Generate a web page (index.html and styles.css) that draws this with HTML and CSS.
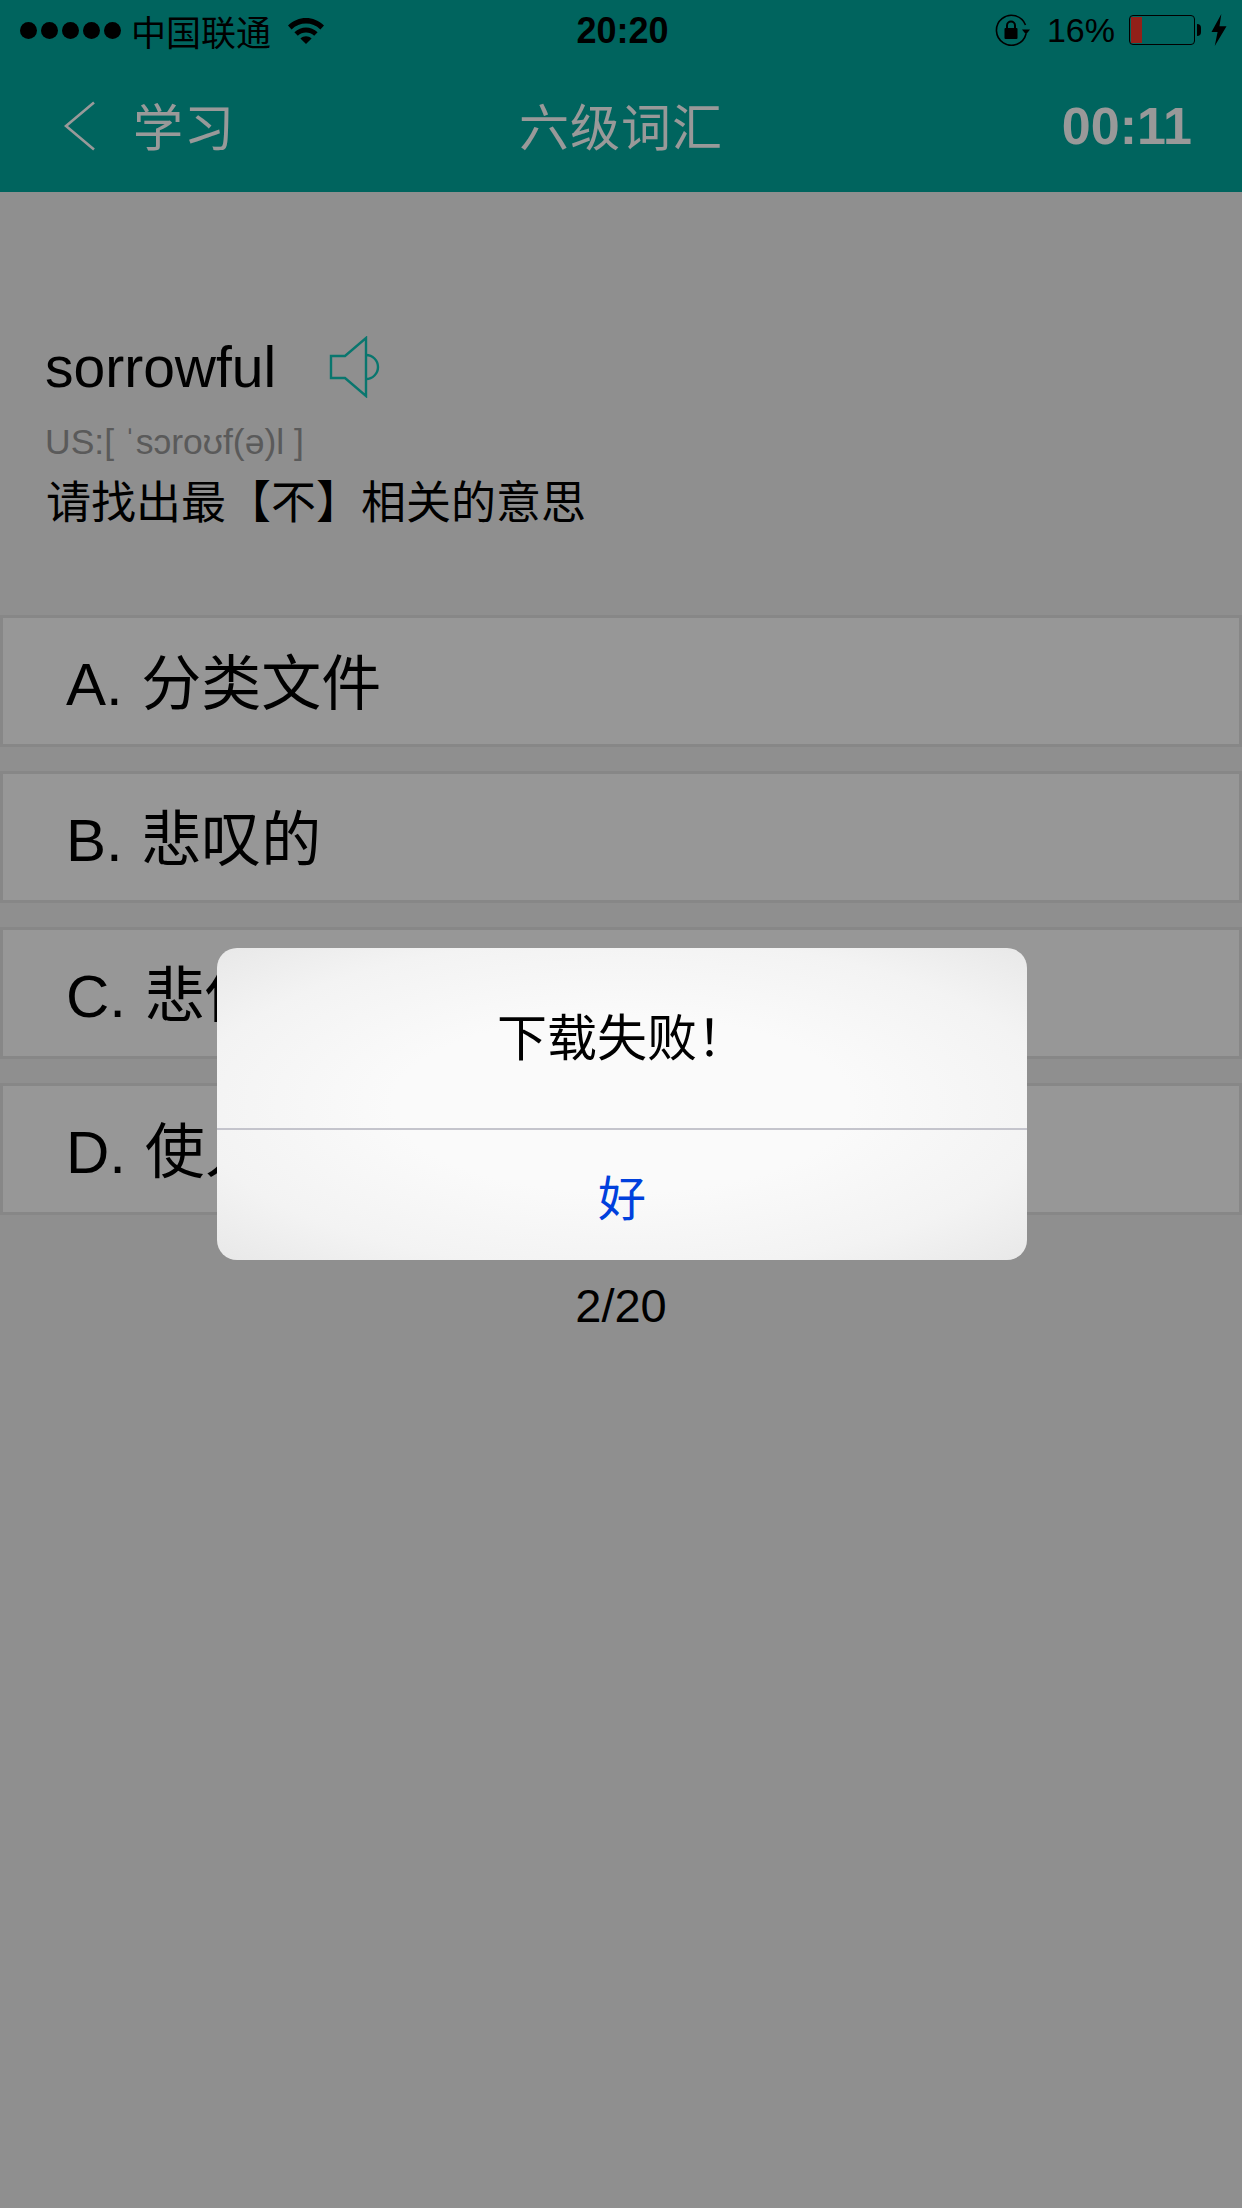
FILE: index.html
```html
<!DOCTYPE html>
<html lang="zh-CN">
<head>
    <meta charset="UTF-8">
    <meta name="viewport" content="width=device-width, initial-scale=1.0">
    <title>六级词汇</title>
    <link rel="stylesheet" href="styles.css">
</head>
<body>
    <header class="top">
        <div class="status-bar">
            <div class="status-left">
                <div class="signal">
                    <span></span><span></span><span></span><span></span><span></span>
                </div>
                <span class="carrier">中国联通</span>
                <svg class="wifi" width="38" height="28" viewBox="0 0 38 28">
                    <path d="M1 9.5C11 -0.5 27 -0.5 37 9.5L33.4 13.4C25.4 5.6 12.6 5.6 4.6 13.4Z"/>
                    <path d="M7.4 16.2C14 9.8 24 9.8 30.6 16.2L27.2 19.8C22.6 15.4 15.4 15.4 10.8 19.8Z"/>
                    <path d="M13.4 22.4C16.6 19.4 21.4 19.4 24.6 22.4L19 28Z"/>
                </svg>
            </div>
            <div class="time">20:20</div>
            <div class="status-right">
                <svg class="lock" width="36" height="32" viewBox="0 0 36 32">
                    <path d="M31 20A15 15 0 1 1 30.5 11" fill="none" stroke="#000" stroke-width="1.6"/>
                    <path d="M27 15.5H35L31 20.5Z"/>
                    <rect x="9.5" y="14" width="13" height="11" rx="1"/>
                    <path d="M12 14.5V11.5A4 4 0 0 1 20 11.5V14.5" fill="none" stroke="#000" stroke-width="2"/>
                </svg>
                <span class="percent">16%</span>
                <div class="battery"><div class="battery-level"></div></div>
                <div class="battery-nub"></div>
                <svg class="bolt" width="16" height="32" viewBox="0 0 16 34">
                    <path d="M10.5 0L0 19H6.5L3.5 34L16 13H8.5Z"/>
                </svg>
            </div>
        </div>
        <nav class="nav">
            <div class="nav-back">
                <svg width="32" height="50" viewBox="0 0 32 50">
                    <path d="M30 1.5L2 25L30 48.5" fill="none" stroke="#fff" stroke-width="2.6"/>
                </svg>
                <span class="nav-label">学习</span>
            </div>
            <div class="nav-title nav-label">六级词汇</div>
            <div class="nav-timer">00:11</div>
        </nav>
    </header>

    <main>
        <section class="question">
            <div class="word-row">
                <span class="word">sorrowful</span>
                <svg class="speaker" width="52" height="62" viewBox="0 0 52 62">
                    <path d="M2 20H16L37 2V60L16 42H2Z" fill="none" stroke="#10c5b8" stroke-width="2.4"/>
                    <path d="M37 19A12 12 0 0 1 37 43" fill="none" stroke="#10c5b8" stroke-width="2.4"/>
                </svg>
            </div>
            <div class="phonetic">US:[ ˈsɔroʊf(ə)l ]</div>
            <div class="prompt">请找出最【不】相关的意思</div>
        </section>

        <section class="options">
            <div class="option">A. 分类文件</div>
            <div class="option">B. 悲叹的</div>
            <div class="option">C. 悲伤的</div>
            <div class="option">D. 使人悲伤</div>
        </section>

        <div class="progress">2/20</div>
    </main>

    <div class="overlay">
        <div class="alert">
            <div class="alert-message">下载失败！</div>
            <div class="alert-button">好</div>
        </div>
    </div>
</body>
</html>
```
FILE: styles.css
```css
:root {
    --teal: #00a79d;
    --background: #eeeeee;
    --option-bg: #fcfcfc;
    --option-border: #e1e1e1;
    --sans: 'Liberation Sans', 'Noto Sans CJK SC', sans-serif;
}

body {
    font-family: var(--sans);
    background-color: var(--background);
    color: #000;
    margin: 0;
    height: 2208px;
    overflow: hidden;
    position: relative;
}

.top {
    background-color: var(--teal);
    height: 192px;
}

/* Status bar */
.status-bar {
    height: 60px;
    display: grid;
    grid-template-columns: 1fr auto 1fr;
    align-items: center;
    padding: 0 15px 0 20px;
}

.status-left,
.status-right {
    display: flex;
    align-items: center;
}

.status-right {
    justify-content: flex-end;
}

.signal {
    display: flex;
    gap: 4px;
    margin-right: 10px;
}

.signal span {
    width: 17px;
    height: 17px;
    border-radius: 50%;
    background-color: #000;
}

.carrier {
    font-size: 35px;
    margin-right: 16px;
}

.time {
    font-size: 36px;
    font-weight: bold;
    margin: 2px 0 0 -2px;
}

.lock {
    margin-right: 16px;
}

.percent {
    font-size: 34px;
    margin-right: 14px;
}

.battery {
    width: 66px;
    height: 30px;
    box-sizing: border-box;
    border: 1.5px solid #000;
    border-radius: 4px;
    padding: 1px;
}

.battery-level {
    width: 11px;
    height: 100%;
    background-color: #f4362a;
}

.battery-nub {
    width: 4px;
    height: 12px;
    background-color: #000;
    border-radius: 0 4px 4px 0;
    margin: 0 10px 0 2px;
}

/* Nav bar */
.nav {
    height: 132px;
    display: grid;
    grid-template-columns: 1fr auto 1fr;
    align-items: center;
    padding: 0 50px;
    color: #fff;
    font-size: 50px;
}

.nav-back {
    display: flex;
    align-items: center;
    gap: 37px;
    padding-left: 14px;
}

.nav-label {
    margin-bottom: 5px;
    letter-spacing: 1px;
}

.nav-timer {
    text-align: right;
    font-size: 52px;
    font-weight: bold;
}

/* Question */
.question {
    padding: 140px 45px 0;
    height: 283px;
}

.word-row {
    display: flex;
    align-items: center;
    gap: 53px;
    height: 70px;
}

.word {
    font-size: 57px;
}

.phonetic {
    font-size: 35.5px;
    color: #969696;
    margin-top: 20px;
    line-height: 40px;
}

.prompt {
    font-size: 45px;
    line-height: 60px;
    margin-top: 12px;
    padding-left: 1px;
}

/* Options */
.options {
    display: flex;
    flex-direction: column;
    gap: 24px;
}

.option {
    height: 132px;
    box-sizing: border-box;
    background-color: var(--option-bg);
    border: 3px solid var(--option-border);
    display: flex;
    align-items: center;
    padding: 0 0 6px 63px;
    font-size: 60px;
    word-spacing: 2px;
}

.progress {
    text-align: center;
    font-size: 47px;
    margin-top: 63px;
}

/* Alert */
.overlay {
    position: absolute;
    top: 0;
    left: 0;
    width: 100%;
    height: 100%;
    box-sizing: border-box;
    padding-left: 2px;
    background-color: rgba(0, 0, 0, 0.4);
    display: flex;
    justify-content: center;
    align-items: center;
}

.alert {
    width: 810px;
    height: 312px;
    border-radius: 20px;
    overflow: hidden;
    display: flex;
    flex-direction: column;
    background: radial-gradient(ellipse at center, #fafafa 40%, #f3f3f3 75%, #e8e8e8 100%);
}

.alert-message {
    height: 182px;
    box-sizing: border-box;
    padding-bottom: 8px;
    display: flex;
    justify-content: center;
    align-items: center;
    font-size: 50px;
    border-bottom: 2px solid #c4c4cc;
}

.alert-button {
    flex: 1;
    display: flex;
    justify-content: center;
    align-items: center;
    font-size: 48px;
    color: #0040dd;
}
```
